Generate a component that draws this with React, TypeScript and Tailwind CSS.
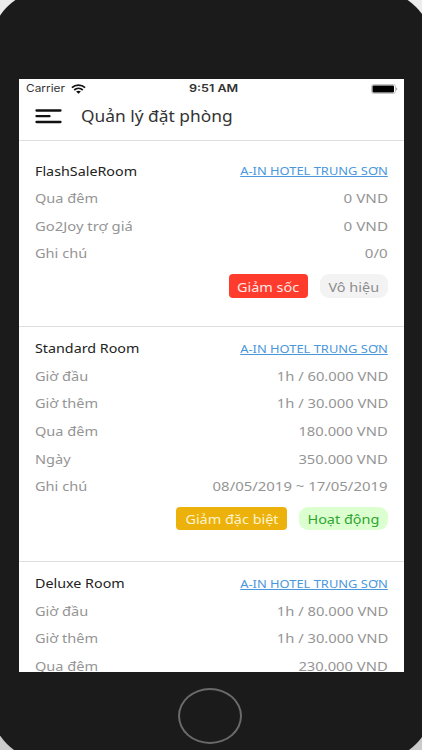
import React from 'react';
import { clsx } from 'clsx';

type Row = {
  label: string;
  value: string;
  labelClass?: string;
  valueClass?: string;
};

type Badge = {
  label: string;
  className: string;
};

type Room = {
  name: string;
  hotel: string;
  rows: Row[];
  badges: Badge[];
};

const rooms: Room[] = [
  {
    name: 'FlashSaleRoom',
    hotel: 'A-IN HOTEL TRUNG SƠN',
    rows: [
      { label: 'Qua đêm', value: '0 VND', valueClass: 'scale-x-[1.17]' },
      { label: 'Go2Joy trợ giá', value: '0 VND', labelClass: 'scale-x-[1.14]', valueClass: 'scale-x-[1.17]' },
      { label: 'Ghi chú', value: '0/0', valueClass: 'scale-x-[1.16]' },
    ],
    badges: [
      { label: 'Giảm sốc', className: 'w-[79.5px] rounded-[4px] bg-[#ff3b2d] text-[#ffe9e6]' },
      { label: 'Vô hiệu', className: 'w-[68px] rounded-[9px] bg-[#f3f3f3] text-[#8c8c8c]' },
    ],
  },
  {
    name: 'Standard Room',
    hotel: 'A-IN HOTEL TRUNG SƠN',
    rows: [
      { label: 'Giờ đầu', value: '1h / 60.000 VND' },
      { label: 'Giờ thêm', value: '1h / 30.000 VND' },
      { label: 'Qua đêm', value: '180.000 VND' },
      { label: 'Ngày', value: '350.000 VND' },
      { label: 'Ghi chú', value: '08/05/2019 ~ 17/05/2019', valueClass: 'scale-x-[1.147]' },
    ],
    badges: [
      { label: 'Giảm đặc biệt', className: 'w-[111px] rounded-[4px] bg-[#ecb10b] text-[#fff4cc]' },
      { label: 'Hoạt động', className: 'w-[89px] rounded-[9px] bg-[#dcffd0] text-[#2fa52f]' },
    ],
  },
  {
    name: 'Deluxe Room',
    hotel: 'A-IN HOTEL TRUNG SƠN',
    rows: [
      { label: 'Giờ đầu', value: '1h / 80.000 VND' },
      { label: 'Giờ thêm', value: '1h / 30.000 VND' },
      { label: 'Qua đêm', value: '230.000 VND' },
    ],
    badges: [],
  },
];

const StatusBar = () => (
  <div className="grid grid-cols-3 items-center h-[17px] pl-[7px] pr-[6px] font-['Inter','Liberation_Sans',sans-serif] text-[10.5px] text-[#333]">
    <div className="flex items-center">
      <span className="w-[45px] origin-left scale-x-[1.13]">Carrier</span>
      <svg width="15" height="10" viewBox="0 0 15 10" fill="none" stroke="#111" strokeWidth="1.7">
        <path d="M0.9 3.6C4.6 0.2 10.4 0.2 14.1 3.6" />
        <path d="M3.2 6C5.7 3.8 9.3 3.8 11.8 6" />
        <path d="M5.1 7.5C6.5 6.4 8.5 6.4 9.9 7.5L7.5 9.7Z" fill="#111" stroke="none" />
      </svg>
    </div>
    <span className="justify-self-center ml-[3px] font-semibold whitespace-nowrap scale-x-[1.2]">9:51 AM</span>
    <svg className="justify-self-end" width="27" height="10" viewBox="0 0 27 10">
      <rect x="0.5" y="0.5" width="24" height="9" rx="2" fill="#fff" stroke="#c4c4c4" />
      <rect x="1.5" y="1.6" width="21.5" height="6.8" rx="1" fill="#000" />
      <path d="M25.2 3.5C26.6 4 26.6 6 25.2 6.5Z" fill="#999" />
    </svg>
  </div>
);

const Header = () => (
  <div className="flex items-center h-[45px] pl-4 pb-1 border-b border-[#dedede]">
    <svg width="27" height="15" viewBox="0 0 27 15" stroke="#111" strokeWidth="2.3" strokeLinecap="round">
      <path d="M1.5 1.5H25.5M1.5 7.2H14.5M1.5 13H25.5" />
    </svg>
    <h1 className="ml-[19px] text-[16px] leading-5 text-[#333] origin-left scale-x-[1.085]">Quản lý đặt phòng</h1>
  </div>
);

const RoomItem = ({ room, first }: { room: Room; first: boolean }) => (
  <section className={clsx('px-4 border-b border-[#dedede]', first ? 'pt-[15.9px] pb-[28.2px]' : 'pt-[7.4px] pb-[30.5px]')}>
    <div className="flex items-center justify-between h-[27.6px]">
      <span className="origin-left scale-x-[1.1] text-[#222]">{room.name}</span>
      <a className="pt-[1.5px] origin-right scale-x-[1.12] text-[11.5px] text-[#4a97dc] underline underline-offset-[1px]">
        {room.hotel}
      </a>
    </div>
    {room.rows.map((row, i) => (
      <div key={i} className="flex items-center justify-between h-[27.6px] text-[#959595]">
        <span className={clsx('origin-left', row.labelClass ?? 'scale-x-[1.12]')}>{row.label}</span>
        <span className={clsx('origin-right', row.valueClass ?? 'scale-x-[1.135]')}>{row.value}</span>
      </div>
    ))}
    {room.badges.length > 0 && (
      <div className="flex justify-end gap-3 mt-[7.2px]">
        {room.badges.map((badge) => (
          <div
            key={badge.label}
            className={clsx('flex items-center justify-center h-[23.3px] pt-px whitespace-nowrap', badge.className)}
          >
            <span className="scale-x-[1.11]">{badge.label}</span>
          </div>
        ))}
      </div>
    )}
  </section>
);

export default function App() {
  return (
    <div className="w-[422px] h-[750px] overflow-hidden bg-gradient-to-b from-[#ececec] to-[#cacaca] flex items-center justify-center">
      {/* Phone body */}
      <div className="shrink-0 flex flex-col w-[443px] h-[771px] rounded-[58px] bg-[#1b1b1b] pt-[89.5px] pl-[29.5px]">
        <div className="w-[385px] h-[593px] overflow-hidden bg-white font-['Noto_Sans','Open_Sans',sans-serif] text-[13px] leading-5">
          <StatusBar />
          <Header />
          {rooms.map((room, i) => (
            <RoomItem key={room.name} room={room} first={i === 0} />
          ))}
        </div>
        {/* Home button */}
        <div className="mt-4 ml-[159px] w-16 h-14 rounded-[50%] border-2 border-[#6a6a6a]" />
      </div>
    </div>
  );
}
